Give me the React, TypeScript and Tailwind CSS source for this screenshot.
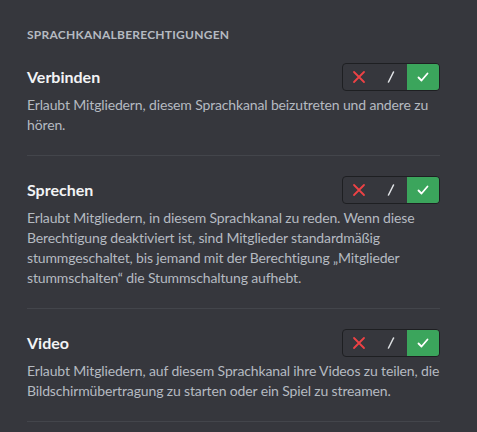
import React from "react"

interface Permission {
  title: string
  description: string
}

const permissions: Permission[] = [
  {
    title: "Verbinden",
    description: "Erlaubt Mitgliedern, diesem Sprachkanal beizutreten und andere zu hören.",
  },
  {
    title: "Sprechen",
    description:
      "Erlaubt Mitgliedern, in diesem Sprachkanal zu reden. Wenn diese Berechtigung deaktiviert ist, sind Mitglieder standardmäßig stummgeschaltet, bis jemand mit der Berechtigung „Mitglieder stummschalten“ die Stummschaltung aufhebt.",
  },
  {
    title: "Video",
    description:
      "Erlaubt Mitgliedern, auf diesem Sprachkanal ihre Videos zu teilen, die Bildschirmübertragung zu starten oder ein Spiel zu streamen.",
  },
]

function PermissionToggle() {
  return (
    <div className="flex h-[28px] shrink-0 overflow-hidden rounded-[4px] border border-[#1e1f22]">
      <button className="flex w-[32px] items-center justify-center">
        <svg width="14" height="14" viewBox="0 0 14 14">
          <path d="M2 2L12 12M12 2L2 12" stroke="#ed4245" strokeWidth="1.8" strokeLinecap="round" />
        </svg>
      </button>
      <button className="flex w-[32px] items-center justify-center">
        <svg width="12" height="14" viewBox="0 0 12 14">
          <path d="M8.5 2L3.5 12" stroke="#dbdee1" strokeWidth="1.6" strokeLinecap="round" />
        </svg>
      </button>
      <button className="flex w-[32px] items-center justify-center bg-[#3ba55c]">
        <svg width="14" height="14" viewBox="0 0 14 14">
          <path d="M2.5 7.5L5.5 10.5L11.5 3.5" stroke="#ffffff" strokeWidth="1.8" fill="none" strokeLinecap="round" strokeLinejoin="round" />
        </svg>
      </button>
    </div>
  )
}

export default function App() {
  return (
    <div className="min-h-[432px] w-full bg-[#36373d] pl-[27px] pr-[37px] pt-[27px] font-['Lato',sans-serif]">
      <h2 className="text-[12px] font-bold uppercase leading-[16px] tracking-[0.02em] text-[#b5bac1]">
        Sprachkanalberechtigungen
      </h2>
      <div className="mt-[20px]">
        {permissions.map((perm, idx) => (
          <div key={idx} className={idx > 0 ? "pt-[20px]" : ""}>
            <div className="flex items-center justify-between">
              <span className="text-[16px] font-bold leading-[20px] text-[#f2f3f5]">{perm.title}</span>
              <PermissionToggle />
            </div>
            <p className="mt-[4px] text-[14px] leading-[20px] tracking-[-0.01em] text-[#b5bac1]">{perm.description}</p>
            <div className="mt-[20px] h-px bg-[#43454b]" />
          </div>
        ))}
      </div>
    </div>
  )
}
